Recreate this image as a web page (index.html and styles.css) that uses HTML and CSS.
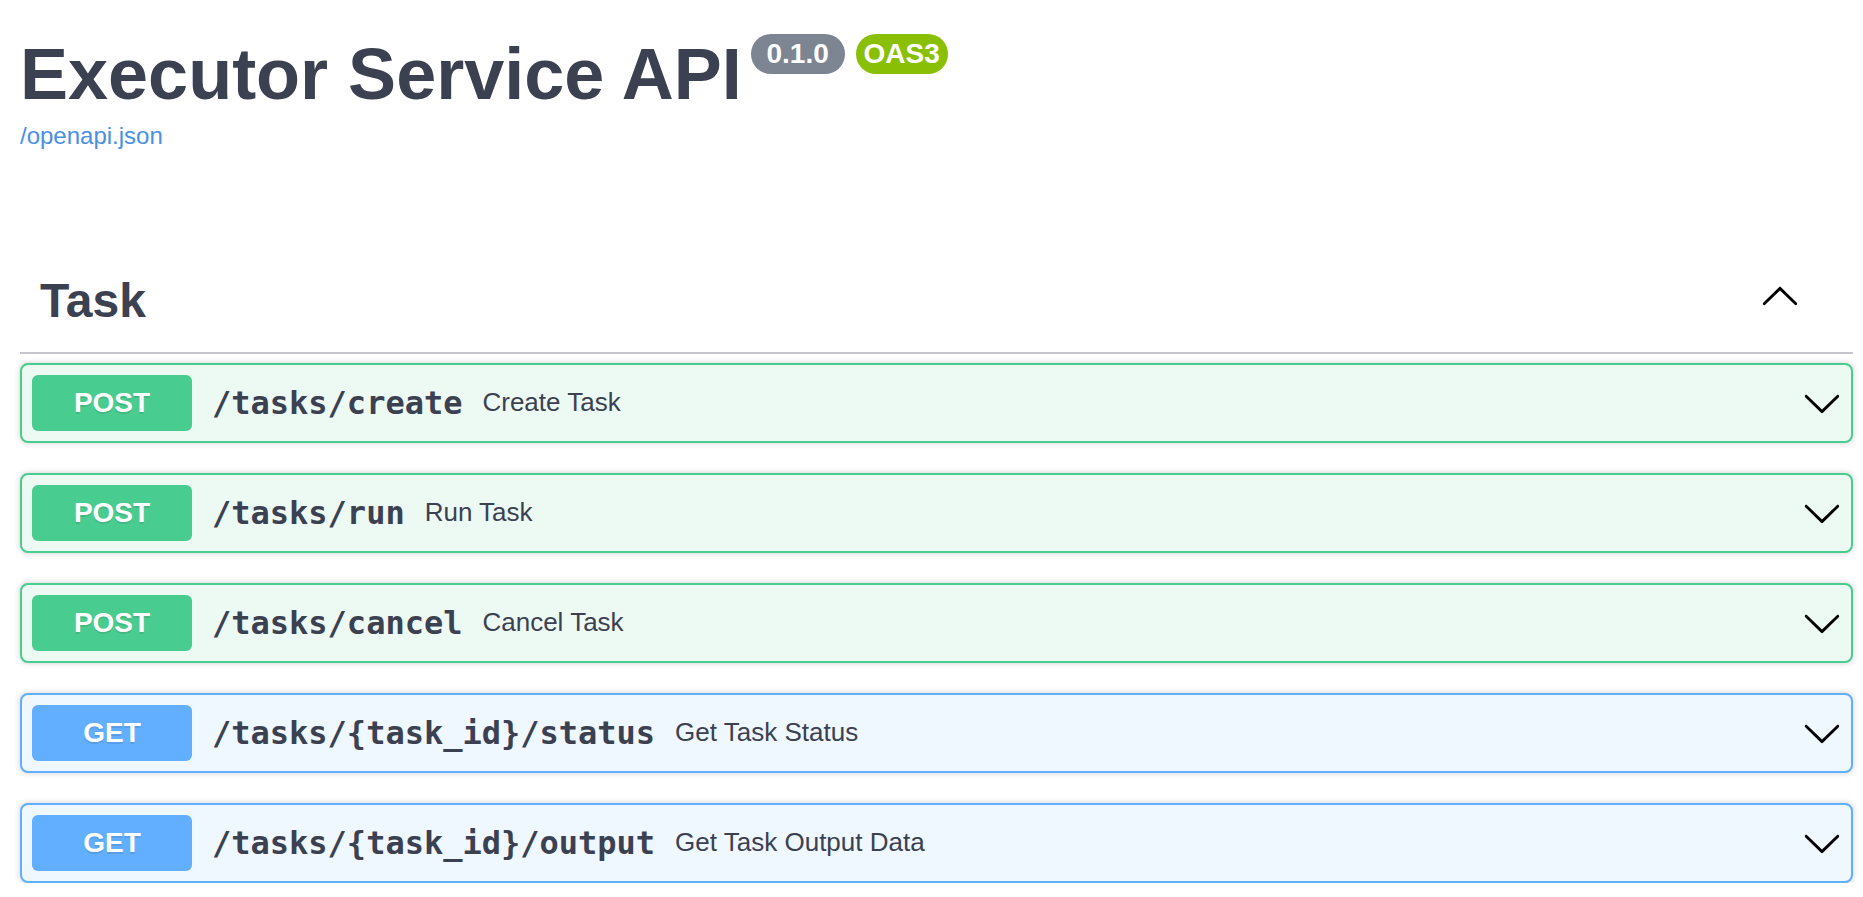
FILE: index.html
```html
<!DOCTYPE html>
<html lang="en">
<head>
<meta charset="utf-8">
<title>Executor Service API</title>
<link rel="stylesheet" href="styles.css">
</head>
<body>
<div class="wrapper">
  <div class="info">
    <div class="title-row">
      <h2 class="title">Executor Service API</h2>
      <span class="pill pill-version"> 0.1.0 </span>
      <span class="pill pill-oas">OAS3</span>
    </div>
    <a class="base-url" href="#">/openapi.json</a>
  </div>

  <section class="tag-section">
    <div class="tag-header">
      <h3 class="tag-name">Task</h3>
      <span class="tag-arrow">
        <svg width="40" height="40" viewBox="0 0 20 20"><path d="M17.418 6.109c.272-.268.709-.268.979 0s.271.701 0 .969l-7.908 7.830c-.27.268-.707.268-.979 0l-7.908-7.830c-.27-.268-.27-.701 0-.969.271-.268.709-.268.979 0L10 13.25l7.418-7.141z" transform="rotate(180 10 10)"/></svg>
      </span>
    </div>

    <div class="ops">
      <div class="op op-post">
        <span class="method">POST</span>
        <span class="path">/tasks/create</span>
        <span class="desc">Create Task</span>
        <svg class="op-arrow" width="40" height="40" viewBox="0 0 20 20"><path d="M17.418 6.109c.272-.268.709-.268.979 0s.271.701 0 .969l-7.908 7.83c-.27.268-.707.268-.979 0l-7.908-7.83c-.27-.268-.27-.701 0-.969.271-.268.709-.268.979 0L10 13.25l7.418-7.141z"/></svg>
      </div>
      <div class="op op-post">
        <span class="method">POST</span>
        <span class="path">/tasks/run</span>
        <span class="desc">Run Task</span>
        <svg class="op-arrow" width="40" height="40" viewBox="0 0 20 20"><path d="M17.418 6.109c.272-.268.709-.268.979 0s.271.701 0 .969l-7.908 7.83c-.27.268-.707.268-.979 0l-7.908-7.83c-.27-.268-.27-.701 0-.969.271-.268.709-.268.979 0L10 13.25l7.418-7.141z"/></svg>
      </div>
      <div class="op op-post">
        <span class="method">POST</span>
        <span class="path">/tasks/cancel</span>
        <span class="desc">Cancel Task</span>
        <svg class="op-arrow" width="40" height="40" viewBox="0 0 20 20"><path d="M17.418 6.109c.272-.268.709-.268.979 0s.271.701 0 .969l-7.908 7.83c-.27.268-.707.268-.979 0l-7.908-7.83c-.27-.268-.27-.701 0-.969.271-.268.709-.268.979 0L10 13.25l7.418-7.141z"/></svg>
      </div>
      <div class="op op-get">
        <span class="method">GET</span>
        <span class="path">/tasks/{task_id}/status</span>
        <span class="desc">Get Task Status</span>
        <svg class="op-arrow" width="40" height="40" viewBox="0 0 20 20"><path d="M17.418 6.109c.272-.268.709-.268.979 0s.271.701 0 .969l-7.908 7.83c-.27.268-.707.268-.979 0l-7.908-7.83c-.27-.268-.27-.701 0-.969.271-.268.709-.268.979 0L10 13.25l7.418-7.141z"/></svg>
      </div>
      <div class="op op-get">
        <span class="method">GET</span>
        <span class="path">/tasks/{task_id}/output</span>
        <span class="desc">Get Task Output Data</span>
        <svg class="op-arrow" width="40" height="40" viewBox="0 0 20 20"><path d="M17.418 6.109c.272-.268.709-.268.979 0s.271.701 0 .969l-7.908 7.83c-.27.268-.707.268-.979 0l-7.908-7.83c-.27-.268-.27-.701 0-.969.271-.268.709-.268.979 0L10 13.25l7.418-7.141z"/></svg>
      </div>
    </div>
  </section>
</div>
</body>
</html>
```

FILE: styles.css
```css
html, body {
  margin: 0;
  padding: 0;
  background: #ffffff;
}

body {
  font-family: "Liberation Sans", Arial, sans-serif;
  color: #3b4151;
}

.wrapper {
  padding: 0 10px 0 20px;
}

.info {
  padding-top: 33px;
}

.title-row {
  display: flex;
  align-items: flex-start;
}

.title {
  margin: 0;
  font-size: 72px;
  line-height: 82.8px;
  font-weight: 700;
  color: #3b4151;
}

.pill {
  display: inline-block;
  margin-top: 1px;
  padding: 4px 8px;
  line-height: 32px;
  border-radius: 57px;
  color: #ffffff;
  font-family: "Liberation Sans", Arial, sans-serif;
  font-weight: 700;
  font-size: 28px;
  white-space: pre;
}

.pill-version {
  margin-left: 9px;
  background: #7d8492;
}

.pill-oas {
  margin-left: 11px;
  background: #89bf04;
}

.base-url {
  display: block;
  margin-top: 6px;
  font-size: 24px;
  line-height: 27.6px;
  color: #4990e2;
  text-decoration: none;
}

.tag-section {
  margin-top: 104px;
}

.tag-header {
  display: flex;
  align-items: center;
  padding: 20px 53px 23px 20px;
  border-bottom: 2px solid #c4c6cb;
}

.tag-name {
  flex: 1;
  margin: 0;
  font-size: 48px;
  line-height: 55.2px;
  font-weight: 700;
  color: #3b4151;
}

.tag-arrow {
  display: flex;
  margin-bottom: 7px;
}

.ops {
  display: flex;
  flex-direction: column;
  gap: 30px;
  margin-top: 9px;
}

.op {
  display: flex;
  align-items: center;
  padding: 10px;
  border: 2px solid;
  border-radius: 8px;
  box-shadow: 0 0 6px rgba(0, 0, 0, 0.19);
}

.op-post {
  background: #edfaf4;
  border-color: #49cc90;
}

.op-get {
  background: #eff7ff;
  border-color: #61affe;
}

.method {
  width: 160px;
  padding: 12px 0;
  border-radius: 6px;
  text-align: center;
  font-size: 28px;
  line-height: 32px;
  font-weight: 700;
  color: #ffffff;
  text-shadow: 0 2px 0 rgba(0, 0, 0, 0.1);
}

.op-post .method {
  background: #49cc90;
}

.op-get .method {
  background: #61affe;
}

.path {
  padding: 0 20px;
  font-family: "DejaVu Sans Mono", monospace;
  font-size: 32px;
  font-weight: 700;
  color: #3b4151;
}

.desc {
  flex: 1;
  font-size: 26px;
  color: #3b4151;
}

.op-arrow {
  flex: none;
  margin-right: -1px;
}
```
